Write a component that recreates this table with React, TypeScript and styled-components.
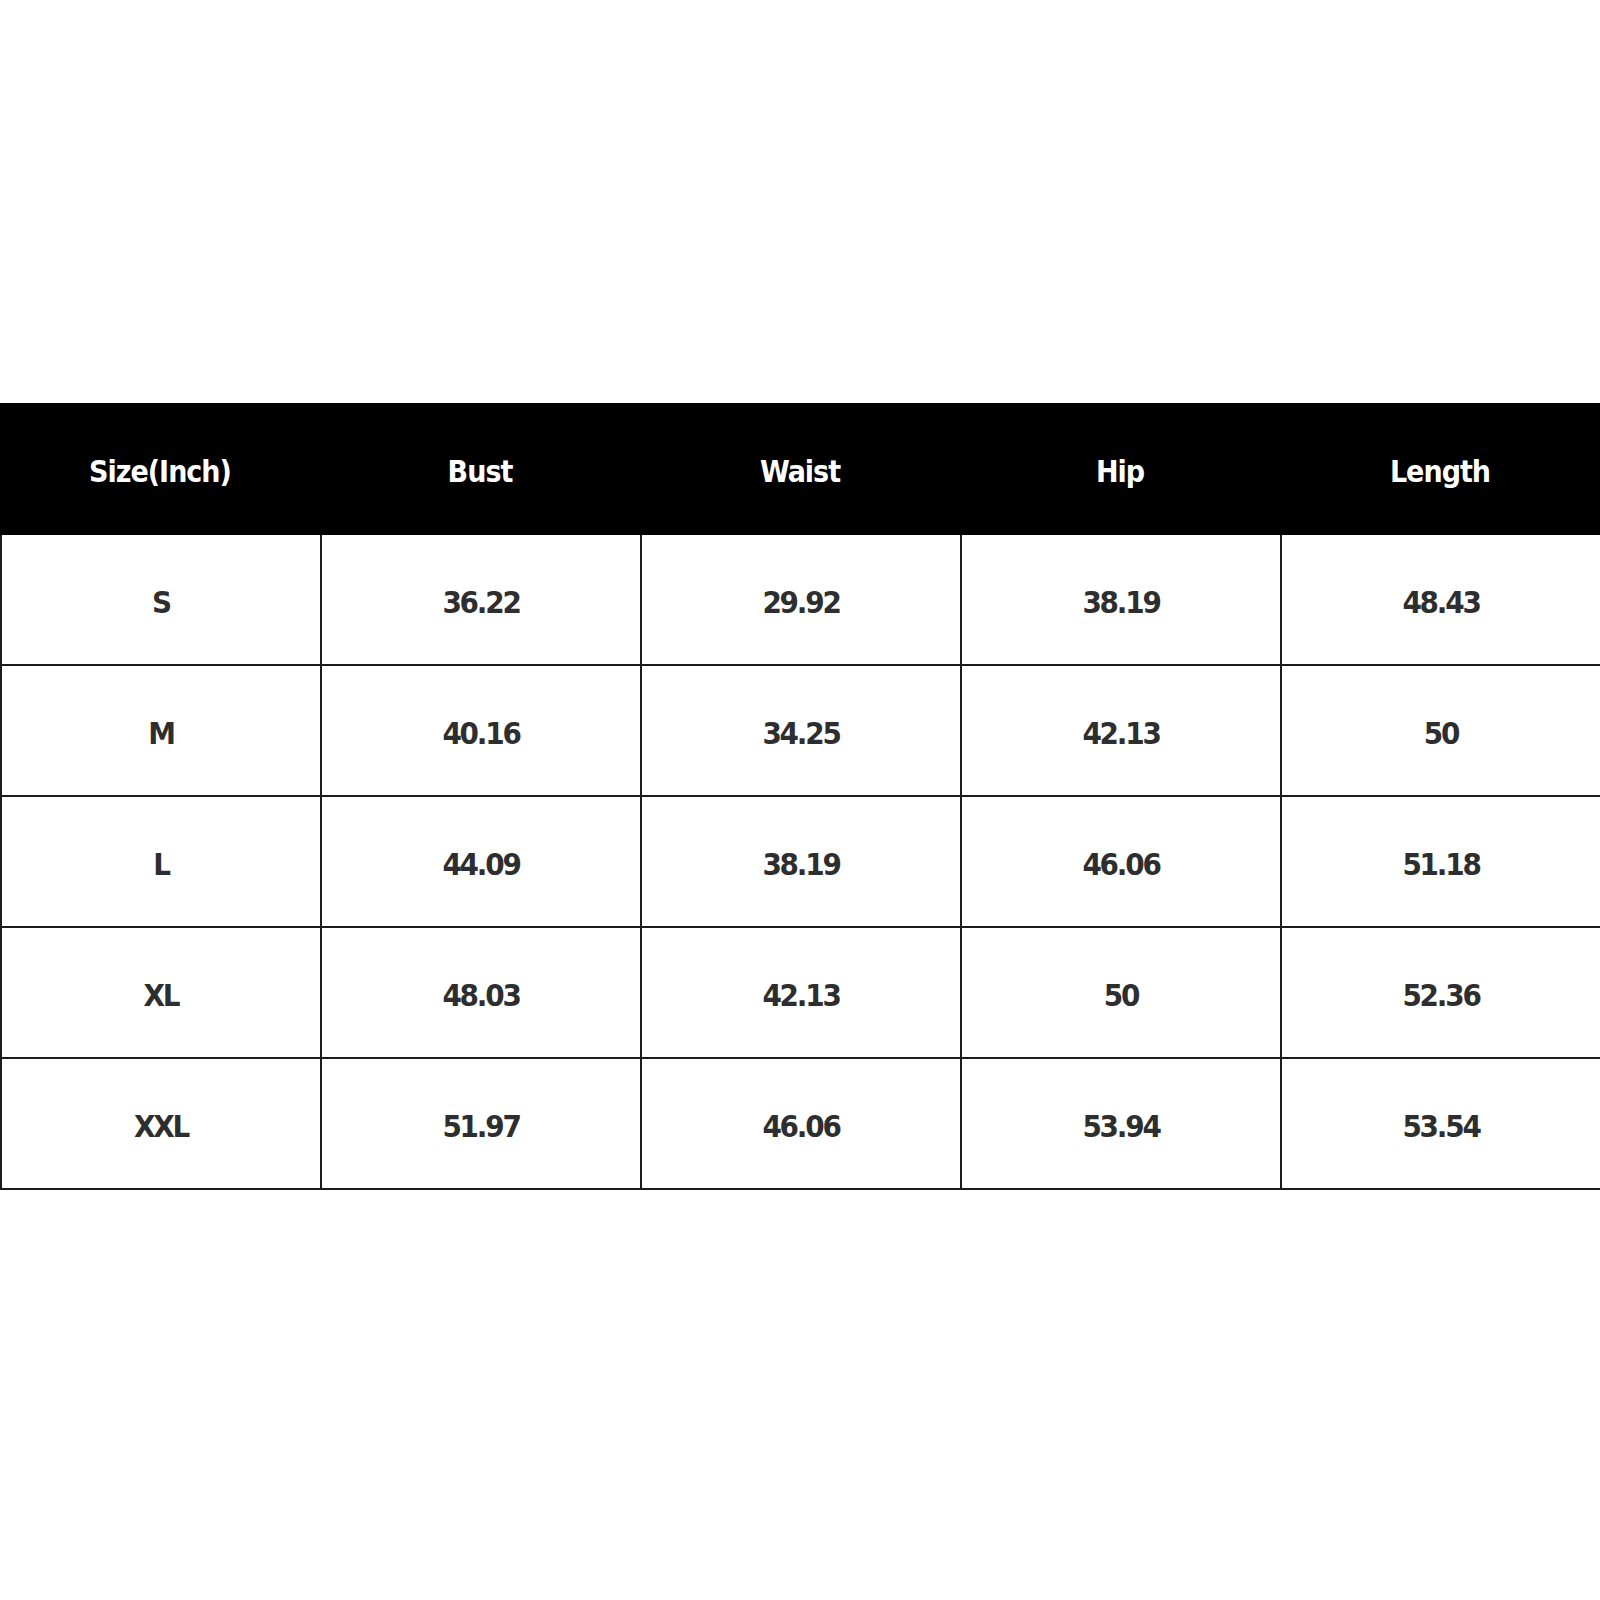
import React from "react";
import styled, { createGlobalStyle } from "styled-components";

const columns = ["Size(Inch)", "Bust", "Waist", "Hip", "Length"];

const rows: Array<Array<string>> = [
  ["S", "36.22", "29.92", "38.19", "48.43"],
  ["M", "40.16", "34.25", "42.13", "50"],
  ["L", "44.09", "38.19", "46.06", "51.18"],
  ["XL", "48.03", "42.13", "50", "52.36"],
  ["XXL", "51.97", "46.06", "53.94", "53.54"],
];

export default function App() {
  return (
    <Page>
      <GlobalStyle />
      <Table>
        <HeadRow>
          {columns.map(name => (
            <HeadCell key={name}>{name}</HeadCell>
          ))}
        </HeadRow>
        {rows.map(row => (
          <BodyRow key={row[0]}>
            {row.map((value, i) => (
              <Cell key={i}>{value}</Cell>
            ))}
          </BodyRow>
        ))}
      </Table>
    </Page>
  );
}

const GlobalStyle = createGlobalStyle`
  body {
    margin: 0;
    background: #ffffff;
    font-family: "DejaVu Sans", "Liberation Sans", sans-serif;
    font-stretch: condensed;
  }
  * {
    box-sizing: border-box;
  }
`;

const Page = styled.div`
  width: 1600px;
  height: 1600px;
  padding-top: 403px;
  background: #ffffff;
`;

const Table = styled.div`
  width: 1600px;
  display: flex;
  flex-direction: column;
`;

const HeadRow = styled.div`
  display: grid;
  grid-template-columns: repeat(5, 320px);
  height: 132px;
  background: #000000;
`;

const HeadCell = styled.div`
  display: flex;
  align-items: center;
  justify-content: center;
  color: #ffffff;
  font-size: 30px;
  font-weight: 700;
  font-stretch: condensed;
  letter-spacing: -1px;
  padding-top: 4px;
`;

const BodyRow = styled.div`
  display: grid;
  grid-template-columns: repeat(5, 320px);
  height: 131px;
  border-bottom: 2px solid #1c1c1c;
`;

const Cell = styled.div`
  display: flex;
  align-items: center;
  justify-content: center;
  border-left: 2px solid #1c1c1c;
  color: #2e2e2e;
  font-size: 31px;
  font-weight: 700;
  font-stretch: condensed;
  letter-spacing: -2.2px;
  padding-top: 5px;
`;
